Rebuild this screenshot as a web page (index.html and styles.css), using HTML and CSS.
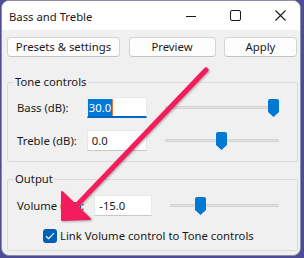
FILE: index.html
```html
<!DOCTYPE html>
<html lang="en">
<head>
  <meta charset="UTF-8">
  <title>Bass and Treble</title>
  <link rel="stylesheet" href="styles.css">
</head>
<body>
  <div class="window">
    <div class="titlebar">
      <span class="title">Bass and Treble</span>
      <div class="caption">
        <span class="cap-btn">
          <svg width="10" height="10" viewBox="0 0 10 10"><path d="M0 5.5H10" stroke="#1a1a1a" stroke-width="1"/></svg>
        </span>
        <span class="cap-btn">
          <svg width="11" height="11" viewBox="0 0 11 11"><rect x="0.5" y="0.5" width="10" height="10" rx="1.5" fill="none" stroke="#1a1a1a" stroke-width="1"/></svg>
        </span>
        <span class="cap-btn">
          <svg width="11" height="11" viewBox="0 0 11 11"><path d="M0.5 0.5L10.5 10.5M10.5 0.5L0.5 10.5" stroke="#1a1a1a" stroke-width="1.1"/></svg>
        </span>
      </div>
    </div>

    <div class="content">
      <div class="toolbar">
        <button class="btn btn-presets">Presets &amp; settings</button>
        <button class="btn btn-preview">Preview</button>
        <button class="btn btn-apply">Apply</button>
      </div>

      <fieldset class="group group-tone">
        <legend>Tone controls</legend>
        <div class="grid">
          <label>Bass (dB):</label>
          <div class="field focused"><span class="sel">30.0</span><span class="caret"></span></div>
          <div class="slider" style="--pos: 1">
            <div class="track"></div>
            <svg class="thumb" width="11" height="18" viewBox="0 0 11 18"><path d="M0 2Q0 0 2 0H9Q11 0 11 2V13L5.5 18L0 13Z" fill="#0078d4"/></svg>
          </div>

          <label>Treble (dB):</label>
          <div class="field">0.0</div>
          <div class="slider" style="--pos: 0.5">
            <div class="track"></div>
            <svg class="thumb" width="11" height="18" viewBox="0 0 11 18"><path d="M0 2Q0 0 2 0H9Q11 0 11 2V13L5.5 18L0 13Z" fill="#0078d4"/></svg>
          </div>
        </div>
      </fieldset>

      <fieldset class="group group-output">
        <legend>Output</legend>
        <div class="grid">
          <label>Volume (dB):</label>
          <div class="field">-15.0</div>
          <div class="slider" style="--pos: 0.25">
            <div class="track"></div>
            <svg class="thumb" width="11" height="18" viewBox="0 0 11 18"><path d="M0 2Q0 0 2 0H9Q11 0 11 2V13L5.5 18L0 13Z" fill="#0078d4"/></svg>
          </div>
        </div>
        <div class="check-row">
          <span class="checkbox">
            <svg width="10" height="8" viewBox="0 0 10 8"><path d="M1 4.2L3.6 6.6L9 1.2" fill="none" stroke="#fff" stroke-width="1.2"/></svg>
          </span>
          <span>Link Volume control to Tone controls</span>
        </div>
      </fieldset>
    </div>
  </div>

  <svg class="arrow" width="304" height="258" viewBox="0 0 304 258">
    <path d="M206 70L78 204" stroke="#f41c5d" stroke-width="5" stroke-linecap="round"/>
    <path d="M62 220L62 192L90 219Z" fill="#f41c5d" stroke="#f41c5d" stroke-width="2" stroke-linejoin="round"/>
  </svg>
</body>
</html>
```

FILE: styles.css
```css
body {
  margin: 0;
  width: 304px;
  height: 258px;
  background: #4e4c94;
  font-family: "Noto Sans", "Open Sans", sans-serif;
  font-size: 11.3px;
  color: #1a1a1a;
  overflow: hidden;
}
.window {
  margin-left: 1px;
  width: 300px;
  height: 256px;
  box-sizing: border-box;
  border: 1px solid #8d8cae;
  border-radius: 8px;
  background: #f0f0f0;
  overflow: hidden;
}
.titlebar {
  height: 29px;
  background: #fff;
  display: flex;
  align-items: center;
  justify-content: space-between;
}
.title {
  padding-left: 7px;
  line-height: 16px;
  margin-top: 2px;
}
.caption {
  display: flex;
  margin-right: -3px;
}
.cap-btn {
  width: 45px;
  height: 29px;
  display: flex;
  align-items: center;
  justify-content: center;
}
.toolbar {
  display: flex;
  justify-content: space-between;
  margin: 7px 3px 0 5px;
}
.btn {
  height: 20px;
  padding: 0;
  border: 1px solid #d3d3d3;
  border-bottom-color: #c2c2c2;
  border-radius: 4px;
  background: #fdfdfd;
  font-family: inherit;
  font-size: inherit;
  color: #1a1a1a;
  line-height: 16px;
}
.btn-presets {
  width: 113px;
}
.btn-preview {
  width: 87px;
}
.btn-apply {
  width: 73px;
}
.group {
  margin: 0 2px 0 5px;
  border: 1px solid #dadada;
  border-radius: 2px;
  padding: 7px 18px 10px 9px;
}
.group legend {
  margin-left: -3px;
  padding: 0 1px;
  line-height: 16px;
}
.group-tone {
  margin-top: 17px;
}
.group-output {
  margin-top: 9px;
  padding-top: 8px;
  padding-bottom: 6px;
}
.grid {
  display: grid;
  grid-template-columns: auto 60px 1fr;
  column-gap: 10px;
  row-gap: 12px;
  align-items: center;
}
.grid label {
  line-height: 16px;
}
.group-output .grid {
  grid-template-columns: auto 58px 1fr;
}
.field {
  height: 21px;
  box-sizing: border-box;
  background: #fff;
  border: 1px solid #e8e8e8;
  border-bottom-color: #c8c8c8;
  padding: 1px 4px 0;
  line-height: 18px;
  white-space: nowrap;
}
.field.focused {
  border-bottom: 2px solid #0067c0;
  padding-left: 0;
}
.sel {
  background: #0078d7;
  color: #fff;
  padding: 0 1px;
  display: inline-block;
  line-height: 17px;
}
.caret {
  display: inline-block;
  width: 1px;
  height: 17px;
  background: #e07a3c;
  vertical-align: top;
}
.slider {
  position: relative;
  height: 21px;
  margin-left: 8px;
}
.track {
  margin-top: 9px;
  height: 3px;
  box-sizing: border-box;
  background: #e4e4e4;
  border: 1px solid #d2d2d2;
  border-radius: 1px;
}
.thumb {
  position: absolute;
  top: 2px;
  left: calc(var(--pos) * (100% - 11px));
}
.check-row {
  display: flex;
  align-items: center;
  margin: 12px 0 0 26px;
  line-height: 16px;
}
.checkbox {
  width: 14px;
  height: 14px;
  border-radius: 3px;
  background: #005fb8;
  display: flex;
  align-items: center;
  justify-content: center;
  margin-right: 3px;
}
.arrow {
  position: absolute;
  top: 0;
  left: 0;
  pointer-events: none;
  filter: drop-shadow(1px 1px 1px rgba(0, 0, 0, 0.3));
}
```
